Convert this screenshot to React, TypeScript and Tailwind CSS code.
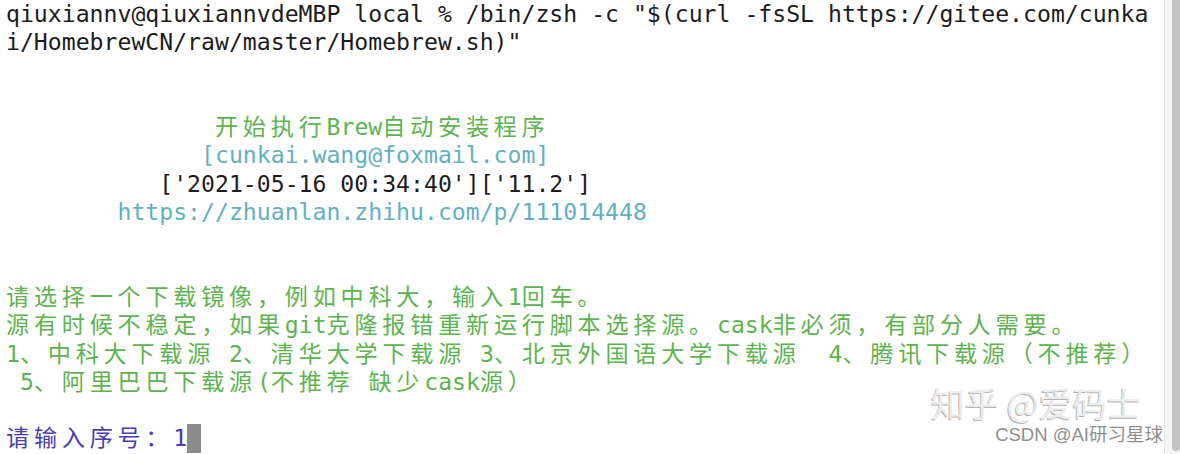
import { Fragment } from "react";

// one terminal column is 13.94px; wide (CJK) chars take two columns
const WIDE = /([\u3000-\u303f\u4e00-\u9fff\uff00-\uffef]+)/;

function Cells({ text }: { text: string }) {
  const parts = text.split(WIDE);
  return (
    <>
      {parts.map((p, i) =>
        i % 2 === 1 ? (
          <span key={i} className="tracking-[4.74px]">
            {p}
          </span>
        ) : (
          <Fragment key={i}>{p}</Fragment>
        )
      )}
    </>
  );
}

const GREEN = "text-[#5db44f]";
const CYAN = "text-[#62b0c1]";
const DARK = "text-[#1c1c1c]";

const rows: { text: string; color: string }[] = [
  { text: 'qiuxiannv@qiuxiannvdeMBP local % /bin/zsh -c "$(curl -fsSL https://gitee.com/cunka', color: DARK },
  { text: 'i/HomebrewCN/raw/master/Homebrew.sh)"', color: DARK },
  { text: "", color: DARK },
  { text: "", color: DARK },
  { text: "               开始执行Brew自动安装程序", color: GREEN },
  { text: "              [cunkai.wang@foxmail.com]", color: CYAN },
  { text: "           ['2021-05-16 00:34:40']['11.2']", color: DARK },
  { text: "        https://zhuanlan.zhihu.com/p/111014448", color: CYAN },
  { text: "", color: DARK },
  { text: "", color: DARK },
  { text: "请选择一个下载镜像，例如中科大，输入1回车。", color: GREEN },
  { text: "源有时候不稳定，如果git克隆报错重新运行脚本选择源。cask非必须，有部分人需要。", color: GREEN },
  { text: "1、中科大下载源 2、清华大学下载源 3、北京外国语大学下载源  4、腾讯下载源（不推荐）", color: GREEN },
  { text: " 5、阿里巴巴下载源(不推荐 缺少cask源）", color: GREEN },
  { text: "", color: DARK },
];

export default function App() {
  return (
    <div className="relative w-[1180px] h-[454px] overflow-hidden bg-white flex">
      <div className="flex-1 pl-[6px] font-['DejaVu_Sans_Mono','Noto_Sans_CJK_SC',monospace] text-[23.15px] whitespace-pre">
        {rows.map((r, i) => (
          <div key={i} className={`h-[28.3px] leading-[28.3px] ${r.color}`}>
            <Cells text={r.text} />
          </div>
        ))}
        <div className="h-[28.3px] leading-[28.3px] flex items-stretch text-[#4c3cae]">
          <span>
            <Cells text="请输入序号：1" />
          </span>
          <span className="inline-block w-[13.94px] h-[28.3px] bg-[#8c8c8c]" />
        </div>
      </div>

      {/* scrollbar */}
      <div className="w-[16px] h-full border-l border-[#e6e6e6] bg-[#f4f4f4] flex justify-end">
        <div className="w-[8px] h-[451px] rounded-b-[4px] bg-[#c2c2c2]" />
      </div>

      {/* watermarks */}
      <div className="absolute left-[931px] top-[386px] text-[34px] leading-[34px] text-[#ececec] font-['Noto_Sans_CJK_SC',sans-serif] [text-shadow:-1px_1px_0_#b4b4b4] whitespace-pre">
        知乎 @爱码士
      </div>
      <div className="absolute right-[17px] top-[425px] text-[18.5px] leading-[20px] text-[#8f8f8f] font-['Liberation_Sans','Noto_Sans_CJK_SC',sans-serif] whitespace-pre">
        CSDN @AI研习星球
      </div>
    </div>
  );
}
